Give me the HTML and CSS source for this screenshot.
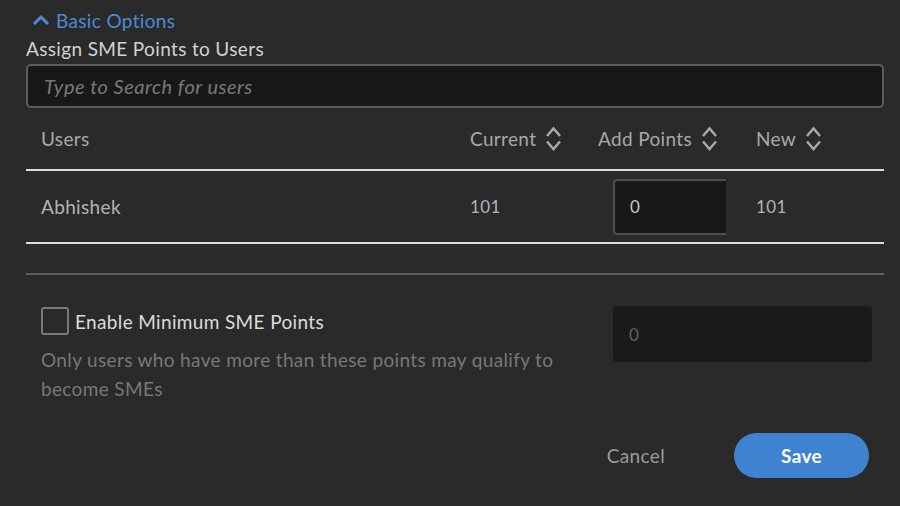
FILE: index.html
```html
<!DOCTYPE html>
<html>
<head>
<meta charset="utf-8">
<link rel="stylesheet" href="styles.css">
</head>
<body>
<div class="panel">
  <div class="toggle">
    <svg class="toggle-icon" width="18" height="12" viewBox="0 0 18 12"><path d="M2 10 L9 3 L16 10" fill="none" stroke="#4a8ad6" stroke-width="3"/></svg>
    <span>Basic Options</span>
  </div>
  <div class="label">Assign SME Points to Users</div>
  <input class="search" type="text" placeholder="Type to Search for users">

  <div class="table">
    <div class="thead">
      <div class="th">Users</div>
      <div class="th">Current <svg class="sort" width="17" height="27" viewBox="0 0 17 27"><path d="M2 11 L8.5 3.5 L15 11 M2 16.5 L8.5 24 L15 16.5" fill="none" stroke="#a8a8a8" stroke-width="2.5"/></svg></div>
      <div class="th">Add Points <svg class="sort" width="17" height="27" viewBox="0 0 17 27"><path d="M2 11 L8.5 3.5 L15 11 M2 16.5 L8.5 24 L15 16.5" fill="none" stroke="#a8a8a8" stroke-width="2.5"/></svg></div>
      <div class="th">New <svg class="sort" width="17" height="27" viewBox="0 0 17 27"><path d="M2 11 L8.5 3.5 L15 11 M2 16.5 L8.5 24 L15 16.5" fill="none" stroke="#a8a8a8" stroke-width="2.5"/></svg></div>
    </div>
    <div class="trow">
      <div class="td name">Abhishek</div>
      <div class="td num">101</div>
      <div class="td cell-input"><input class="points" type="text" value="0"></div>
      <div class="td num">101</div>
    </div>
  </div>

  <div class="divider"></div>

  <div class="min-section">
    <div class="min-left">
      <label class="check-row">
        <span class="checkbox"></span>
        <span class="check-label">Enable Minimum SME Points</span>
      </label>
      <p class="desc">Only users who have more than these points may qualify to become SMEs</p>
    </div>
    <input class="min-input" type="text" placeholder="0" disabled>
  </div>

  <div class="footer">
    <button class="btn-cancel">Cancel</button>
    <button class="btn-save">Save</button>
  </div>
</div>
</body>
</html>
```

FILE: styles.css
```css
html, body {
  margin: 0;
  padding: 0;
  background: #2a2a2a;
  font-family: "Lato", "Liberation Sans", sans-serif;
}

.panel {
  padding: 6px 16px 0 26px;
  width: 900px;
  box-sizing: border-box;
  letter-spacing: 0.35px;
}

.toggle {
  display: flex;
  align-items: center;
  gap: 6px;
  height: 28px;
  margin-left: 6px;
  color: #4a8ad6;
  font-size: 19px;
}

.toggle-icon {
  display: block;
}

.label {
  margin-top: 2px;
  height: 26px;
  line-height: 26px;
  font-size: 19px;
  color: #d2d2d2;
}

.search {
  display: block;
  margin-top: 2px;
  width: 100%;
  height: 44px;
  box-sizing: border-box;
  border: 2px solid #5c5c5c;
  border-radius: 5px;
  background: #181818;
  padding: 0 16px;
  font-family: inherit;
  font-size: 20px;
  font-style: italic;
  letter-spacing: 0.5px;
  color: #ddd;
  outline: none;
}

.search::placeholder {
  color: #787878;
  font-style: italic;
}

.thead, .trow {
  display: grid;
  grid-template-columns: 429px 128px 158px 1fr;
  padding-left: 15px;
  border-bottom: 2px solid #dcdcdc;
}

.thead {
  height: 61px;
  align-items: center;
}

.trow {
  height: 71px;
  align-items: center;
}

.th {
  display: flex;
  align-items: center;
  gap: 9px;
  font-size: 19px;
  color: #a8a8a8;
}

.sort {
  display: block;
}

.td {
  color: #b4b4b4;
}

.name {
  font-size: 19px;
}

.num {
  font-size: 17px;
}

.cell-input {
  padding-left: 15px;
}

.points {
  display: block;
  width: 113px;
  height: 56px;
  box-sizing: border-box;
  background: #181818;
  border: 2px solid #4f4f4f;
  border-right: none;
  border-radius: 4px 0 0 4px;
  padding: 0 0 0 15px;
  font-family: inherit;
  font-size: 17px;
  color: #c8c8c8;
  outline: none;
}

.divider {
  margin-top: 29px;
  border-top: 2px solid #5e5e5e;
}

.min-section {
  display: flex;
  justify-content: space-between;
  align-items: flex-start;
  padding-top: 31px;
}

.min-left {
  padding-left: 15px;
  width: 542px;
}

.check-row {
  display: flex;
  align-items: center;
  gap: 6px;
  height: 30px;
}

.checkbox {
  display: block;
  width: 28px;
  height: 28px;
  box-sizing: border-box;
  border: 2px solid #7a7a7a;
  border-radius: 3px;
}

.check-label {
  font-size: 19px;
  color: #dcdcdc;
}

.desc {
  margin: 9px 0 0 0;
  font-size: 19px;
  line-height: 29px;
  color: #787878;
}

.min-input {
  display: block;
  margin-right: 12px;
  width: 259px;
  height: 56px;
  box-sizing: border-box;
  border: none;
  border-radius: 4px;
  background: #1a1a1a;
  padding: 0 16px;
  font-family: inherit;
  font-size: 17px;
  outline: none;
}

.min-input::placeholder {
  color: #606060;
}

.footer {
  display: flex;
  justify-content: flex-end;
  align-items: center;
  gap: 69px;
  padding-top: 30px;
  padding-right: 15px;
}

.btn-cancel {
  background: none;
  border: none;
  padding: 0;
  font-family: inherit;
  font-size: 19px;
  letter-spacing: 0.35px;
  color: #9a9a9a;
}

.btn-save {
  width: 135px;
  height: 45px;
  border: none;
  border-radius: 23px;
  background: #3f82d0;
  color: #ffffff;
  font-family: inherit;
  font-size: 19px;
  font-weight: 700;
  letter-spacing: 0.35px;
}
```
